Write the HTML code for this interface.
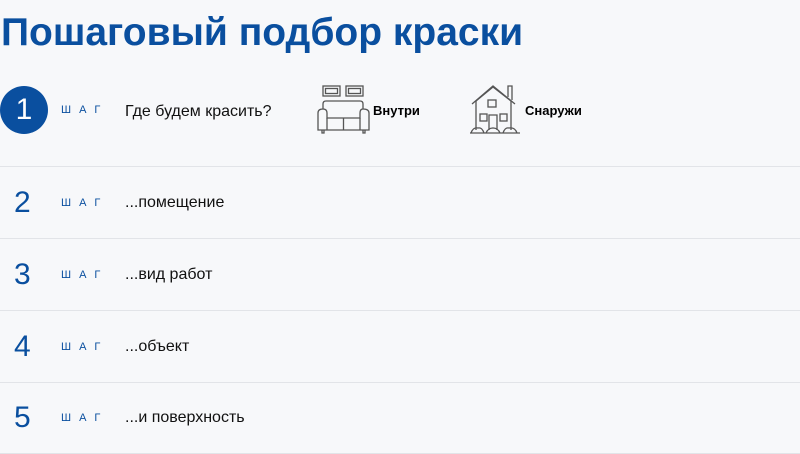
<!DOCTYPE html>
<html><head><meta charset="utf-8"><style>
body{margin:0;width:800px;height:454px;background:#f7f8fa;font-family:"Liberation Sans",sans-serif;position:relative;overflow:hidden}
h1{position:absolute;left:1px;top:11px;margin:0;font-size:39px;font-weight:bold;color:#0a4f9f;white-space:nowrap}
.row{position:absolute;left:0;width:800px;height:72px;border-bottom:1px solid #e2e4e8}
.num{position:absolute;left:14px;font-size:30px;color:#0a4f9f;top:50%;transform:translateY(-50%)}
.circ{position:absolute;left:0;top:86px;width:48px;height:48px;border-radius:50%;background:#0a4f9f;color:#fff;font-size:30px;text-align:center;line-height:48px}
.shag{position:absolute;left:61px;font-size:11px;letter-spacing:8px;color:#0a4f9f;top:50%;transform:translateY(-50%)}
.t{position:absolute;left:125px;font-size:16px;color:#111;top:50%;transform:translateY(-50%)}
.lbl{position:absolute;font-size:13px;font-weight:bold;color:#000}
</style></head><body>
<h1>Пошаговый подбор краски</h1>
<div class="row" style="top:0;height:166px;border-bottom:1px solid #e2e4e8"></div>
<div class="circ">1</div>
<div class="shag" style="top:110px">ШАГ</div>
<div class="t" style="top:112px">Где будем красить?</div>
<svg style="position:absolute;left:314px;top:82px" width="60" height="56" viewBox="0 0 60 56" fill="none" stroke="#555" stroke-width="1.3">
<rect x="9" y="4" width="17" height="10"/><rect x="11.5" y="6.5" width="12" height="5"/>
<rect x="32" y="4" width="17" height="10"/><rect x="34.5" y="6.5" width="12" height="5"/>
<path d="M9 27 V22 Q9 19 12 19 H46 Q49 19 49 22 V27"/>
<path d="M9 27 Q4 27 4 31 V48 H55 V31 Q55 27 49 27 Q46 27 46 31 V36 H13 V31 Q13 27 9 27 Z"/>
<path d="M13 36 V48 M46 36 V48 M29.5 36 V48"/>
<path d="M8 48 V51 H10 V48 M49 48 V51 H51 V48"/>
</svg>
<div class="lbl" style="left:373px;top:103px">Внутри</div>
<svg style="position:absolute;left:468px;top:82px" width="56" height="56" viewBox="0 0 56 56" fill="none" stroke="#555" stroke-width="1.3">
<path d="M4 22 L25 4 L47 22"/><path d="M8 19 V48 M43 19 V48"/>
<path d="M8 19 L25 5 L43 19"/><path d="M40 15 V4 H44 V18"/>
<rect x="20" y="18" width="8" height="7"/>
<rect x="12" y="32" width="7" height="7"/><rect x="32" y="32" width="7" height="7"/>
<path d="M21 48 V33 H29 V48"/>
<path d="M3 51 Q5 45 10 46 Q14 45 16 51 Z M18 51 Q20 46 25 46 Q30 46 32 51 Z M35 51 Q37 45 41 46 Q47 45 49 51 Z M2 51 H52"/>
</svg>
<div class="lbl" style="left:525px;top:103px">Снаружи</div>
<div class="row" style="top:167px;height:71px"><div class="num">2</div><div class="shag">ШАГ</div><div class="t">...помещение</div></div>
<div class="row" style="top:239px;height:71px"><div class="num">3</div><div class="shag">ШАГ</div><div class="t">...вид работ</div></div>
<div class="row" style="top:311px;height:71px"><div class="num">4</div><div class="shag">ШАГ</div><div class="t">...объект</div></div>
<div class="row" style="top:383px;height:70px"><div class="num">5</div><div class="shag">ШАГ</div><div class="t">...и поверхность</div></div>
</body></html>
